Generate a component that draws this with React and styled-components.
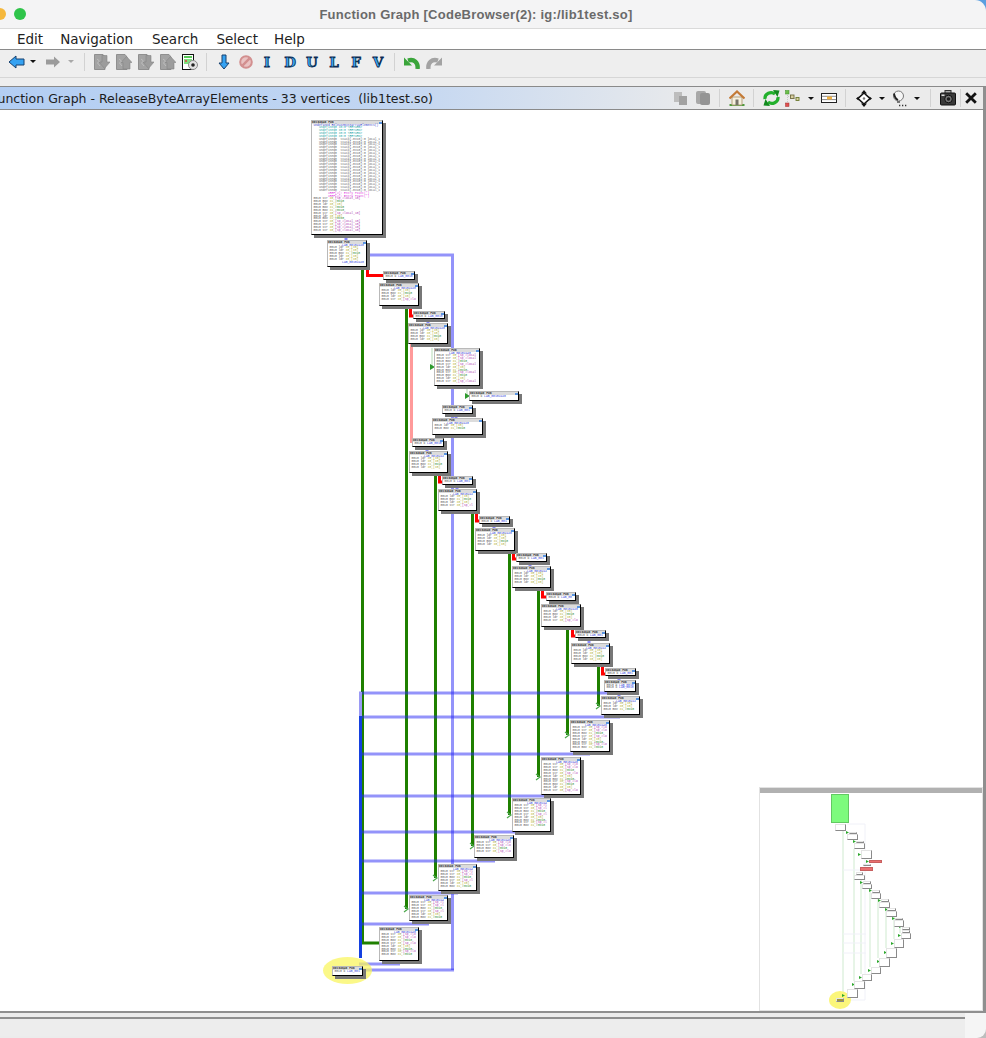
import styled, { createGlobalStyle } from "styled-components";

const CANVAS_TOP = 110;
const CHAR_W = 1.8;
const ROW_H = 2.85;

// x, y, w, h in page pixels, listing says what kind of code block it is
const vertices = [
  [311, 120, 72, 115, "entry"],
  [327, 240, 40, 27, "plain"],
  [383, 271, 32, 9, "stub"],
  [379, 283, 40, 23, "call"],
  [413, 311, 32, 8, "stub"],
  [408, 323, 40, 21, "plain"],
  [434, 348, 46, 38, "long"],
  [469, 391, 50, 10, "stub"],
  [442, 405, 31, 9, "stub"],
  [432, 418, 51, 17, "call"],
  [412, 438, 32, 9, "stub"],
  [409, 451, 39, 22, "plain"],
  [442, 476, 31, 9, "stub"],
  [438, 489, 39, 22, "call"],
  [479, 516, 31, 8, "stub"],
  [475, 528, 40, 23, "plain"],
  [516, 553, 31, 9, "stub"],
  [512, 566, 39, 22, "plain"],
  [546, 592, 30, 9, "stub"],
  [541, 604, 40, 23, "call"],
  [575, 630, 31, 8, "stub"],
  [571, 643, 39, 21, "plain"],
  [605, 668, 31, 8, "stub"],
  [604, 680, 32, 12, "stub"],
  [601, 696, 39, 19, "plain"],
  [570, 720, 40, 32, "long"],
  [541, 757, 40, 38, "long"],
  [512, 798, 39, 34, "long"],
  [474, 835, 40, 23, "long"],
  [438, 864, 39, 27, "long"],
  [409, 895, 39, 26, "long"],
  [379, 927, 40, 34, "long"],
  [332, 966, 31, 10, "stub"],
];

// x, y, w, h of the overview boxes
const overview = [
  [831, 794, 18, 29, "entry"],
  [835, 824, 11, 7], [849, 832, 8, 2], [847, 834, 11, 6], [856, 841, 8, 2],
  [854, 843, 11, 6], [861, 850, 11, 9], [869, 860, 13, 3, "bad"], [863, 864, 8, 2],
  [860, 867, 13, 4, "bad"], [856, 872, 7, 3], [854, 875, 11, 5], [863, 881, 8, 3],
  [862, 884, 10, 5], [872, 890, 8, 3], [871, 893, 10, 6], [881, 899, 8, 3],
  [879, 902, 11, 6], [887, 908, 9, 3], [886, 911, 11, 6], [895, 918, 8, 2],
  [894, 920, 10, 7], [902, 927, 8, 3], [902, 930, 8, 3], [901, 933, 10, 6],
  [894, 939, 10, 9], [886, 948, 11, 10], [879, 958, 11, 9], [871, 967, 10, 7],
  [862, 974, 10, 7], [854, 981, 11, 8], [847, 989, 11, 9], [836, 998, 8, 4, "exit"],
];

const trunks = [
  [405, 307, 909],
  [434, 473, 878],
  [471, 511, 846],
  [508, 551, 815],
  [537, 588, 777],
  [566, 627, 735],
  [597, 664, 706],
];

const conditionals = [
  [409, 307, 316, 413],
  [438, 473, 482, 442],
  [475, 511, 521, 479],
  [512, 551, 559, 516],
  [541, 588, 597, 546],
  [571, 627, 636, 575],
  [601, 664, 674, 605],
];

const crossings = [
  [693, 620], [717, 620], [754, 590], [796, 560], [832, 530],
  [861, 495], [893, 458], [924, 429], [964, 400], [970, 454],
];

const fallThroughs = [
  [346, 235, 240], [398, 280, 283], [428, 319, 323], [456, 414, 418], [427, 447, 451],
  [457, 485, 489], [494, 524, 528], [530, 562, 566], [558, 601, 604], [589, 638, 643],
  [619, 676, 680], [619, 692, 696],
];

const listings = {
  stub: ["op", "op", "op"],
  plain: ["lab", "ins", "ins", "arg", "ins", "ins", "lab"],
  call: ["lab", "ins", "arg", "ins", "pur", "ins", "lab"],
  long: ["lab", "pur", "pur", "arg", "pur", "ins", "arg", "pur", "arg", "ins", "pur", "arg", "lab"],
};

const entryListing = [
  "hdr", "teal", "teal", "teal", "teal",
  ...Array(19).fill("data"),
  "mag", "mag", "pur", "arg", "ins", "arg", "arg", "pur", "ins", "arg", "pur", "pur", "pur", "pur", "lab",
];

const rowText = {
  hdr: [["undefined ReleaseByteArrayElements()", "#3344cc"]],
  teal: [["   undefined8 x0:8 <RETURN>", "#2aa8a8"]],
  data: [["   undefined8  Stack[-0x10]:8 local_10", "#666"]],
  mag: [["        XREF[2]: Entry Point(*)", "#e040e0"]],
  lab: [["       LAB_00102a40", "#3344dd"]],
  op: [["0010 b ", "#555"], ["LAB_00102a40", "#3344dd"]],
  ins: [["0010 ldr ", "#555"], ["x8,[x0]", "#b0b030"]],
  arg: [["0010 mov ", "#555"], ["x1,", "#b0b030"], ["#0x10", "#2a8a2a"]],
  pur: [["0010 str ", "#555"], ["x8,", "#b0b030"], ["[sp,#local_10]", "#b040b0"]],
};

// keeps as many rows and characters as the vertex box has room for
function fitRow(row, maxChars) {
  let left = maxChars;
  const bits = [];
  for (const [text, color] of rowText[row]) {
    if (left <= 0) break;
    bits.push([text.slice(0, left), color]);
    left -= text.length;
  }
  return bits;
}

function Listing({ kind, width, height }) {
  const all = kind === "entry" ? entryListing : listings[kind];
  const rows = all.slice(0, Math.max(1, Math.floor((height - 6) / ROW_H)));
  const maxChars = Math.floor((width - 5) / CHAR_W);
  return (
    <NodeBody>
      {rows.map((row, i) => (
        <CodeRow key={i}>
          {fitRow(row, maxChars).map(([text, color], j) => (
            <CodeBit key={j} $color={color}>
              {text}
            </CodeBit>
          ))}
        </CodeRow>
      ))}
    </NodeBody>
  );
}

function GraphEdges() {
  return (
    <EdgeLayer viewBox={`0 ${CANVAS_TOP} 986 901`}>
      <path d="M362.5 268V943H379" fill="none" stroke="#1f8000" strokeWidth="3" />
      <path d="M367.5 268V275.5H383" fill="none" stroke="#ff0000" strokeWidth="3" />
      {trunks.map(([x, from, to]) => (
        <g key={x}>
          <line x1={x + 1.5} y1={from} x2={x + 1.5} y2={to} stroke="#1f8000" strokeWidth="3" />
          <path d={`M${x - 1} ${to - 3}L${x + 3} ${to}L${x - 1} ${to + 3}`} fill="none" stroke="#4aa84a" strokeWidth="1.2" />
        </g>
      ))}
      {conditionals.map(([x, from, to, end]) => (
        <path key={x} d={`M${x + 1.5} ${from}V${to}H${end}`} fill="none" stroke="#ff0000" strokeWidth="3" />
      ))}
      <line x1="411.5" y1="344" x2="411.5" y2="443" stroke="#ff9a9a" strokeWidth="3" />
      <path d="M432 348V367M467 386V396" fill="none" stroke="#cfe8cf" strokeWidth="1.5" />
      <path d="M430 364L435 367L430 370ZM465 393L470 396L465 399Z" fill="#2e9a2e" />
      {fallThroughs.map(([x, from, to]) => (
        <line key={x + from} x1={x} y1={from} x2={x} y2={to} stroke="#8a8aff" strokeWidth="3" />
      ))}
      <path d="M369 255H452.5V970" fill="none" stroke="rgba(40,40,245,0.5)" strokeWidth="3" />
      {crossings.map(([y, end]) => (
        <line key={y} x1="359" y1={y} x2={end} y2={y} stroke="rgba(40,40,245,0.5)" strokeWidth="3" />
      ))}
      <line x1="360.5" y1="692" x2="360.5" y2="716" stroke="#9a9af5" strokeWidth="3" />
      <line x1="360.5" y1="716" x2="360.5" y2="958" stroke="#1440e0" strokeWidth="3" />
      <ellipse cx="347.5" cy="970.5" rx="24.5" ry="13.5" fill="rgba(250,245,90,0.72)" />
    </EdgeLayer>
  );
}

function OverviewEdges() {
  return (
    <OverviewLayer viewBox="760 793 223 217">
      <path d="M843 830V998M854 849V981M861 880V974M870 889V967M878 899V958M886 908V948M894 917V939M900 927V933" stroke="#cfeacf" fill="none" />
      <path d="M843 870H866M843 934H866M843 943H866M843 953H866" stroke="#f0f1f8" fill="none" />
      <path d="M847 824H865V1000H845" stroke="#f0f1f8" fill="none" />
      <ellipse cx="840" cy="1000" rx="11" ry="9" fill="#fbf67a" />
      <path d="M846 831l3 1.5l-3 1.5ZM853 840l3 1.5l-3 1.5ZM858 853l3 1.5l-3 1.5ZM866 860l3 1.5l-3 1.5ZM860 881l3 1.5l-3 1.5ZM869 889l3 1.5l-3 1.5ZM878 899l3 1.5l-3 1.5ZM885 908l3 1.5l-3 1.5ZM892 917l3 1.5l-3 1.5ZM899 925l3 1.5l-3 1.5ZM898 934l3 1.5l-3 1.5ZM891 942l3 1.5l-3 1.5ZM884 951l3 1.5l-3 1.5ZM877 960l3 1.5l-3 1.5ZM868 969l3 1.5l-3 1.5ZM859 976l3 1.5l-3 1.5ZM852 983l3 1.5l-3 1.5ZM842 994l3 1.5l-3 1.5Z" fill="#2ea82e" />
    </OverviewLayer>
  );
}

const ArrowLeft = ({ fill = "#35a2f2", line = "#17406e" }) => (
  <svg width="17" height="14" viewBox="0 0 17 14">
    <path d="M1 7L8 1V4H16V10H8V13Z" fill={fill} stroke={line} />
  </svg>
);

const ArrowRight = () => (
  <svg width="16" height="14" viewBox="0 0 16 14">
    <path d="M15 7L9 1.5V4.5H1V9.5H9V12.5Z" fill="#9b9b9b" />
  </svg>
);

const PageArrow = ({ up }) => (
  <svg width="16" height="16" viewBox="0 0 16 16">
    <path d="M0.5 0.5H9L11 3V15.5H0.5Z" fill="#a3a3a3" stroke="#8f8f8f" />
    <path
      d={up ? "M10.5 2.5L16 8.5H14V15H7V8.5H5Z" : "M8 1.5H13V8H16L10.5 14.5L5 8H8Z"}
      fill="#9c9c9c"
      stroke="#858585"
      strokeWidth="0.6"
    />
    <path d="M3 5L5.5 7L3.5 9L6 12" fill="none" stroke="#c8c8c8" strokeWidth="0.7" />
  </svg>
);

const Snapshot = () => (
  <svg width="16" height="16" viewBox="0 0 16 16">
    <rect x="0.5" y="0.5" width="11" height="15" fill="#fff" stroke="#111" />
    <rect x="2" y="2" width="8" height="2" fill="#57c957" />
    <rect x="2" y="5" width="8" height="5" fill="#7fe07f" />
    <circle cx="4" cy="7" r="1" fill="#e04040" />
    <circle cx="11" cy="11" r="4.5" fill="#e2e2e2" stroke="#8a8a8a" />
    <circle cx="11" cy="11" r="1.8" fill="#222" />
  </svg>
);

const ArrowDown = () => (
  <svg width="12" height="16" viewBox="0 0 12 16">
    <path d="M4 1H8V9H11L6 15L1 9H4Z" fill="#35a2f2" stroke="#17406e" />
  </svg>
);

const NoEntry = () => (
  <svg width="14" height="14" viewBox="0 0 14 14">
    <circle cx="7" cy="7" r="5.8" fill="#eac3c3" stroke="#d28f8f" strokeWidth="2" />
    <line x1="3.4" y1="10.6" x2="10.6" y2="3.4" stroke="#d28f8f" strokeWidth="2.4" />
  </svg>
);

const Undo = ({ color, flip }) => (
  <svg width="16" height="14" viewBox="0 0 16 14" style={flip ? { transform: "scaleX(-1)" } : undefined}>
    <path d="M13.5 14C14.5 7.5 10 3.5 4 5.5" fill="none" stroke={color} strokeWidth="4.4" />
    <path d="M0 2.5L0 10.5L8 10.5Z" fill={color} />
  </svg>
);

const Copies = ({ big }) => (
  <svg width="16" height="16" viewBox="0 0 16 16">
    {big ? (
      <>
        <rect x="1" y="1" width="10" height="13" rx="2" fill="#a8a8a8" />
        <rect x="5" y="3" width="10" height="12" rx="2" fill="#949494" />
      </>
    ) : (
      <>
        <rect x="1" y="2" width="8" height="10" fill="#bdbdbd" />
        <rect x="6" y="6" width="8" height="9" fill="#a2a2a2" />
      </>
    )}
  </svg>
);

const Home = () => (
  <svg width="16" height="16" viewBox="0 0 16 16">
    <path d="M0.5 15H15.5" stroke="#4f9a3d" strokeWidth="2" />
    <path d="M3 7H13V15H3Z" fill="#f6f0df" stroke="#b5a27e" />
    <path d="M0.5 8.5L8 1.5L15.5 8.5" fill="none" stroke="#c47a36" strokeWidth="2.2" />
    <rect x="6.5" y="9.5" width="3" height="5.5" fill="#77736a" />
  </svg>
);

const Refresh = () => (
  <svg width="17" height="18" viewBox="0 0 17 18">
    <path d="M2 10C1.5 4.5 8 2 12 5" fill="none" stroke="#22b02c" strokeWidth="3.2" />
    <path d="M15 8C15.5 13.5 9 16 5 13" fill="none" stroke="#22b02c" strokeWidth="3.2" />
    <path d="M10 1L16.5 1.5L14.5 8ZM7 17L0.5 16.5L2.5 10Z" fill="#128a1e" />
  </svg>
);

const LayoutTree = () => (
  <svg width="15" height="17" viewBox="0 0 15 17">
    <path d="M2.5 3V14M3 6.5H7M9 8.5H11" stroke="#c8c8c8" strokeDasharray="1 1" fill="none" />
    <rect x="0.5" y="0.5" width="3.5" height="3.5" fill="#6cbf4a" stroke="#3f8f2a" strokeWidth="0.5" />
    <rect x="5.5" y="5" width="3.5" height="3.5" fill="#d9cfa0" stroke="#6f6a40" strokeWidth="0.9" />
    <rect x="11" y="7.5" width="3" height="3" fill="#d9cfa0" stroke="#6c7a30" strokeWidth="0.9" />
    <rect x="0.5" y="13" width="3.5" height="3.5" fill="#e05050" stroke="#a03030" strokeWidth="0.5" />
  </svg>
);

const TableIcon = () => (
  <svg width="16" height="10" viewBox="0 0 16 10">
    <rect x="0.5" y="0.5" width="15" height="9" fill="#fff" stroke="#222" />
    <path d="M0.5 3.3H15.5M0.5 6.6H15.5" stroke="#555" strokeWidth="0.7" />
    <rect x="6" y="3.6" width="5" height="2.8" fill="#f0b040" />
  </svg>
);

const Satellite = () => (
  <svg width="16" height="17" viewBox="0 0 16 17">
    <path d="M8 3L14 8.5L8 14L2 8.5Z" fill="#fff" stroke="#111" strokeWidth="1.6" />
    <path d="M8 0L11 3.5H5ZM8 17L5 13.5H11ZM0 8.5L2.5 6.5V10.5ZM16 8.5L13.5 10.5V6.5Z" fill="#111" />
    <circle cx="8" cy="8.5" r="1.2" fill="#777" />
  </svg>
);

const Bulb = () => (
  <svg width="15" height="17" viewBox="0 0 15 17">
    <circle cx="6.5" cy="6" r="5" fill="#f6f6f6" stroke="#777" />
    <path d="M2 3.5C2.5 7 4 9 6 10" fill="none" stroke="#222" strokeWidth="1.8" />
    <path d="M5 12H8" stroke="#555" strokeWidth="1.5" />
    <path d="M7 15.5H8.3M10 15.5H11.3M13 15.5H14.3" stroke="#333" strokeWidth="1.3" />
  </svg>
);

const Camera = () => (
  <svg width="16" height="16" viewBox="0 0 16 16">
    <rect x="5" y="0.5" width="6" height="3" fill="#aaa" stroke="#333" />
    <rect x="0.5" y="3" width="15" height="12" rx="1" fill="#3a3a3a" stroke="#111" />
    <circle cx="8.5" cy="9" r="3.8" fill="#777" stroke="#111" />
    <circle cx="8.5" cy="9" r="1.8" fill="#1c1c1c" />
    <rect x="1.5" y="4.5" width="3" height="1.5" fill="#ddd" />
  </svg>
);

const CloseX = () => (
  <svg width="12" height="12" viewBox="0 0 12 12">
    <path d="M1.2 1.2L10.8 10.8M10.8 1.2L1.2 10.8" stroke="#111" strokeWidth="2.8" />
  </svg>
);

export default function App() {
  return (
    <>
      <GlobalStyle />
      <Window>
        <TitleBar>
          <Light $color="#f5b83d" $left={-6} />
          <Light $color="#2fc44a" $left={14} />
          <Title>Function Graph [CodeBrowser(2): ig:/lib1test.so]</Title>
        </TitleBar>
        <MenuBar>
          <MenuItem $left={17}>Edit</MenuItem>
          <MenuItem $left={17}>Navigation</MenuItem>
          <MenuItem $left={19}>Search</MenuItem>
          <MenuItem $left={18}>Select</MenuItem>
          <MenuItem $left={16}>Help</MenuItem>
        </MenuBar>
        <Toolbar>
          <Slot $left={8}><ArrowLeft /></Slot>
          <Caret $left={5} />
          <Slot $left={9}><ArrowRight /></Slot>
          <Caret $left={7} $muted />
          <Divider $left={10} />
          <Slot $left={9}><PageArrow /></Slot>
          <Slot $left={6}><PageArrow up /></Slot>
          <Slot $left={6}><PageArrow /></Slot>
          <Slot $left={6}><PageArrow up /></Slot>
          <Slot $left={6}><Snapshot /></Slot>
          <Divider $left={8} />
          <Slot $left={11}><ArrowDown /></Slot>
          <Slot $left={9}><NoEntry /></Slot>
          <Letter $left={6}>I</Letter>
          <Letter $left={7}>D</Letter>
          <Letter $left={6}>U</Letter>
          <Letter $left={6}>L</Letter>
          <Letter $left={6}>F</Letter>
          <Letter $left={6}>V</Letter>
          <Divider $left={8} />
          <Slot $left={9}><Undo color="#3aa53a" /></Slot>
          <Slot $left={6}><Undo color="#a3a3a3" flip /></Slot>
        </Toolbar>
        <ToolbarGap />
        <GraphHeader>
          <HeaderTitle>Function Graph - ReleaseByteArrayElements - 33 vertices  (lib1test.so)</HeaderTitle>
          <HeaderTools>
            <Slot><Copies /></Slot>
            <Slot $left={6}><Copies big /></Slot>
            <Divider $left={8} />
            <Slot $left={9}><Home /></Slot>
            <Divider $left={8} />
            <Slot $left={9}><Refresh /></Slot>
            <Slot $left={5}><LayoutTree /></Slot>
            <Caret $left={8} />
            <Slot $left={7}><TableIcon /></Slot>
            <Divider $left={8} />
            <Slot $left={10}><Satellite /></Slot>
            <Caret $left={7} />
            <Slot $left={7}><Bulb /></Slot>
            <Caret $left={7} />
            <Divider $left={10} />
            <Slot $left={9}><Camera /></Slot>
            <Divider $left={4} />
            <Slot $left={4}><CloseX /></Slot>
          </HeaderTools>
        </GraphHeader>
        <Canvas>
          <GraphEdges />
          {vertices.map(([x, y, w, h, kind], i) => (
            <Vertex key={i} $x={x} $y={y - CANVAS_TOP} $w={w} $h={h}>
              <VertexHeader>
                <VertexName>00102a40 FUN</VertexName>
                <VertexDots />
              </VertexHeader>
              <Listing kind={kind} width={w} height={h} />
            </Vertex>
          ))}
          <Overview>
            <OverviewBand />
            <OverviewEdges />
            {overview.map(([x, y, w, h, kind], i) => (
              <OverviewBox key={i} $x={x - 760} $y={y - 793} $w={w} $h={h} $kind={kind} />
            ))}
          </Overview>
        </Canvas>
        <Footer>
          <StatusField />
          <StatusCorner />
        </Footer>
      </Window>
    </>
  );
}

const GlobalStyle = createGlobalStyle`
  html, body {
    margin: 0;
    padding: 0;
    background: #ededed;
  }
`;

const Window = styled.div`
  width: 986px;
  height: 1038px;
  overflow: hidden;
  display: flex;
  flex-direction: column;
  background: #5b9fe0;
  font-family: "DejaVu Sans", "Noto Sans", sans-serif;
`;

const TitleBar = styled.div`
  height: 28px;
  flex: none;
  position: relative;
  display: flex;
  align-items: center;
  justify-content: center;
  padding-right: 34px;
  background: #f4f4f5;
  border-bottom: 1px solid #dadada;
  border-top-right-radius: 11px;
`;

const Light = styled.span`
  position: absolute;
  left: ${(p) => p.$left}px;
  top: 8px;
  width: 12px;
  height: 12px;
  border-radius: 50%;
  background: ${(p) => p.$color};
`;

const Title = styled.div`
  font-family: "Liberation Sans", Arial, sans-serif;
  font-size: 13px;
  font-weight: 700;
  color: #6a6a6a;
  letter-spacing: 0.25px;
`;

const MenuBar = styled.div`
  height: 20px;
  flex: none;
  display: flex;
  align-items: center;
  background: #fff;
  border-bottom: 1px solid #8a8a8a;
`;

const MenuItem = styled.span`
  margin-left: ${(p) => p.$left}px;
  font-size: 13.5px;
  color: #222;
`;

const Toolbar = styled.div`
  height: 23px;
  padding-bottom: 4px;
  flex: none;
  display: flex;
  align-items: center;
  background: #eeeeee;
  border-bottom: 1px solid #d6d6d6;
`;

const ToolbarGap = styled.div`
  height: 8px;
  flex: none;
  background: #eeeeee;
`;

const Slot = styled.span`
  display: inline-flex;
  flex: none;
  align-items: center;
  justify-content: center;
  margin-left: ${(p) => p.$left || 0}px;
`;

const Caret = styled.span`
  flex: none;
  margin-left: ${(p) => p.$left}px;
  width: 0;
  height: 0;
  border-left: 3px solid transparent;
  border-right: 3px solid transparent;
  border-top: 3px solid ${(p) => (p.$muted ? "#a8a8a8" : "#111")};
`;

const Divider = styled.span`
  flex: none;
  margin-left: ${(p) => p.$left}px;
  width: 1px;
  height: 18px;
  background: #d2d2d2;
`;

const Letter = styled.span`
  flex: none;
  width: 16px;
  margin-left: ${(p) => p.$left}px;
  text-align: center;
  font-family: "DejaVu Serif", serif;
  font-size: 13.5px;
  font-weight: 700;
  line-height: 16px;
  color: #38a8f4;
  -webkit-text-stroke: 0.8px #0d2c52;
`;

const GraphHeader = styled.div`
  height: 22px;
  flex: none;
  display: flex;
  align-items: center;
  justify-content: space-between;
  overflow: hidden;
  background: linear-gradient(90deg, #b3cef3 0%, #c2d6f2 40%, #ebebeb 72%);
  border-top: 1px solid #8a8a8a;
  border-bottom: 1px solid #8a8a8a;
  border-right: 3px solid #8f8f8f;
`;

const HeaderTitle = styled.div`
  margin-left: -9px;
  font-size: 12.5px;
  color: #1c1c1c;
  white-space: pre;
`;

const HeaderTools = styled.div`
  display: flex;
  align-items: center;
  padding-right: 6px;
`;

const Canvas = styled.div`
  height: 901px;
  flex: none;
  position: relative;
  overflow: hidden;
  background: #fff;
  border-right: 3px solid #8f8f8f;
  box-sizing: border-box;
`;

const EdgeLayer = styled.svg`
  position: absolute;
  left: 0;
  top: 0;
  width: 986px;
  height: 901px;
`;

const Vertex = styled.div`
  position: absolute;
  left: ${(p) => p.$x}px;
  top: ${(p) => p.$y}px;
  width: ${(p) => p.$w}px;
  height: ${(p) => p.$h}px;
  box-sizing: border-box;
  background: #fff;
  border: 1px solid #b9b9b9;
  border-right-color: #000;
  border-bottom-color: #000;
  box-shadow: 3px 3px 0 #777;
`;

const VertexHeader = styled.div`
  height: 3px;
  display: flex;
  justify-content: space-between;
  align-items: center;
  background: #dcdcdc;
`;

const VertexName = styled.span`
  font-family: "Liberation Mono", monospace;
  font-size: 3px;
  line-height: 3px;
  font-weight: 700;
  color: #333;
  white-space: pre;
`;

const VertexDots = styled.span`
  width: 3px;
  height: 2px;
  flex: none;
  background: #5a94e0;
`;

const NodeBody = styled.div`
  padding: 0.5px 0 0 1.5px;
`;

const CodeRow = styled.div`
  height: ${ROW_H}px;
  font-family: "Liberation Mono", monospace;
  font-size: 3px;
  line-height: ${ROW_H}px;
  white-space: pre;
`;

const CodeBit = styled.span`
  color: ${(p) => p.$color};
`;

const Overview = styled.div`
  position: absolute;
  right: 0;
  bottom: 0;
  width: 224px;
  height: 224px;
  box-sizing: border-box;
  background: #fff;
  border: 1px solid #e2e2e2;
`;

const OverviewBand = styled.div`
  height: 5px;
  background: #b1b1b1;
`;

const OverviewLayer = styled.svg`
  position: absolute;
  left: 0;
  top: 5px;
  width: 223px;
  height: 217px;
`;

const kindFill = { entry: "#7dfb7d", bad: "#ea7070", exit: "#9c9440" };

const OverviewBox = styled.div`
  position: absolute;
  left: ${(p) => p.$x}px;
  top: ${(p) => p.$y + 5}px;
  width: ${(p) => p.$w}px;
  height: ${(p) => p.$h}px;
  box-sizing: border-box;
  background: ${(p) => kindFill[p.$kind] || "#fff"};
  border: 1px solid ${(p) => (p.$kind === "entry" ? "#62c962" : p.$kind === "bad" ? "#c86060" : "#e4e4e4")};
  border-right-color: ${(p) => (p.$kind === "entry" ? "#62c962" : p.$kind === "bad" ? "#c86060" : "#8a8a8a")};
  border-bottom-color: ${(p) => (p.$kind === "entry" ? "#62c962" : p.$kind === "bad" ? "#c86060" : "#8a8a8a")};
`;

const Footer = styled.div`
  flex: 1;
  display: flex;
  align-items: stretch;
  background: #ececec;
  border-top: 2px solid #8f8f8f;
`;

const StatusField = styled.div`
  width: 965px;
  margin: 4px 0 2px;
  background: #ededed;
  border-top: 2px solid #8f8f8f;
`;

const StatusCorner = styled.div`
  flex: 1;
  background: #f5f5f5;
  border-bottom-right-radius: 9px;
  box-shadow: 3px 3px 0 #bdbdbd;
`;
